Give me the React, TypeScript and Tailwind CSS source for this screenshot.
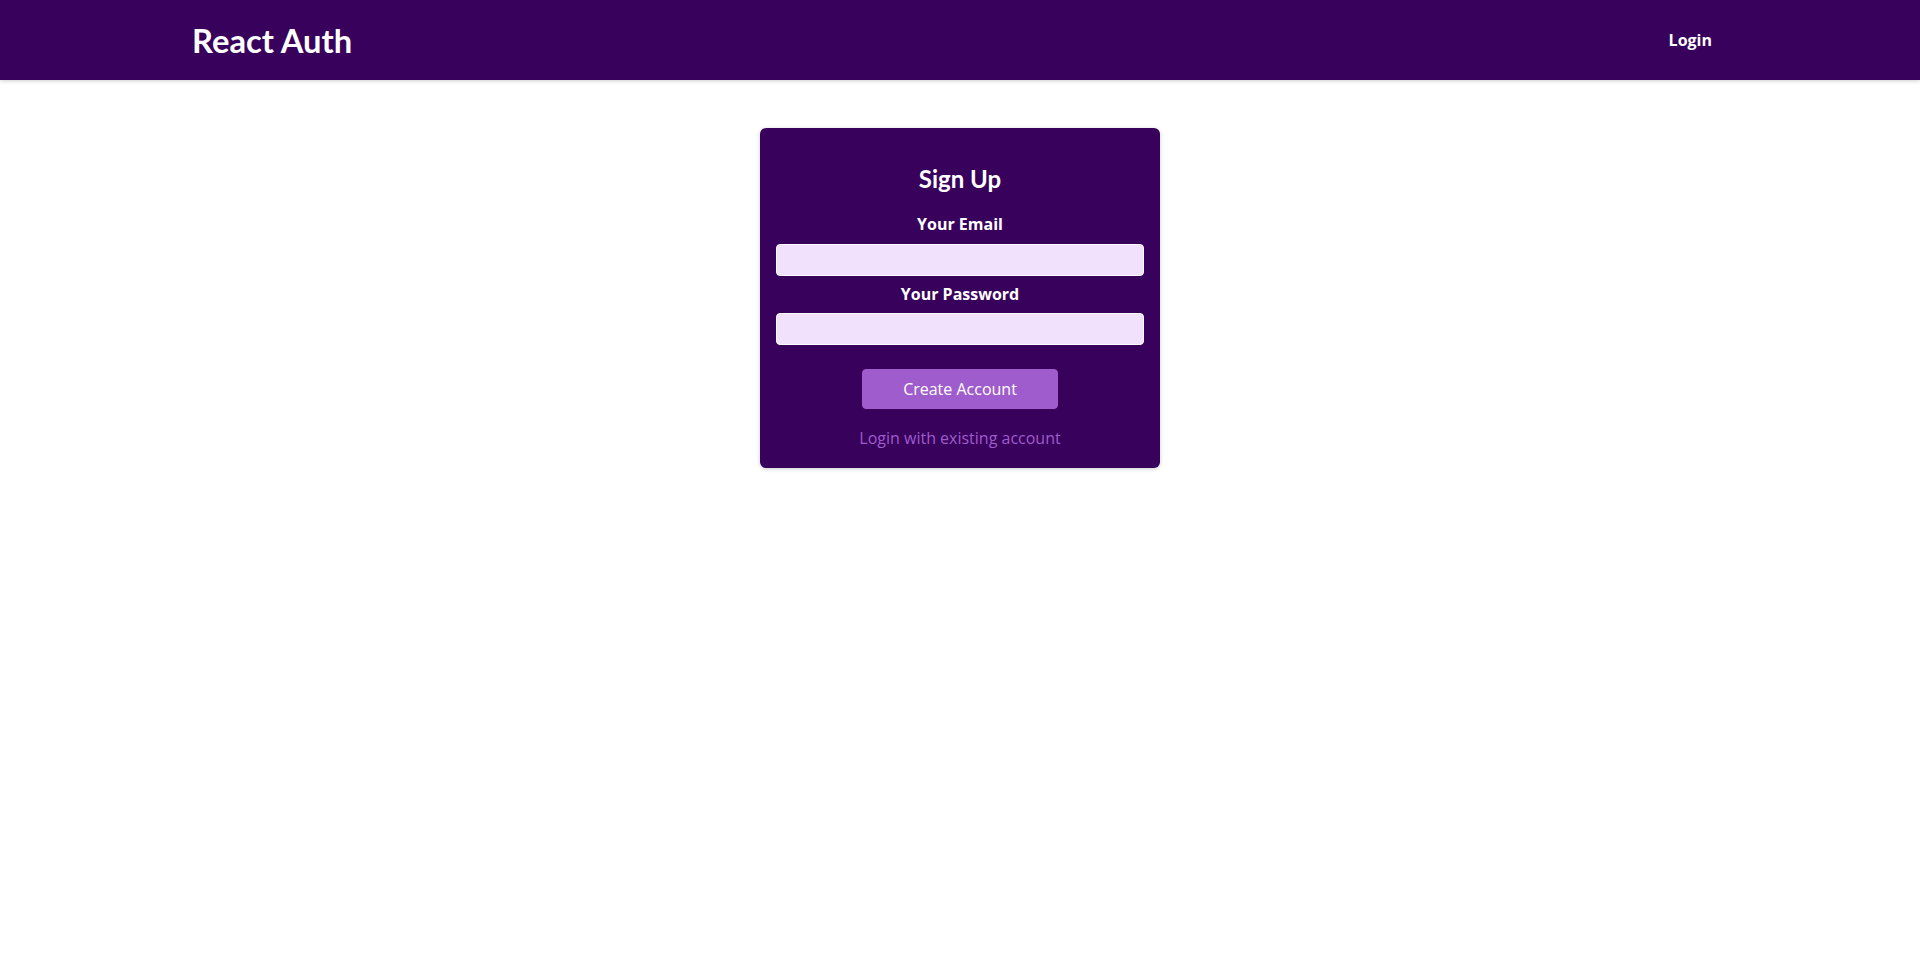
import { useState } from 'react';

function Header() {
  return (
    <header className="flex h-20 w-full items-center justify-between bg-[#38015c] px-[10%] shadow-[0_1px_4px_rgba(0,0,0,0.2)]">
      <div className="m-0 font-['Lato',sans-serif] text-[32.7px] font-bold leading-[normal] text-white">React Auth</div>
      <nav className="pt-[2px]">
        <ul className="m-0 flex list-none items-baseline p-0">
          <li className="mx-4">
            <a href="#" className="font-bold text-white no-underline">Login</a>
          </li>
        </ul>
      </nav>
    </header>
  );
}

function AuthForm() {
  const [email, setEmail] = useState('');
  const [password, setPassword] = useState('');

  return (
    <section className="mx-auto my-12 w-[95%] max-w-[25rem] rounded-md bg-[#38015c] p-4 text-center shadow-[0_1px_4px_rgba(0,0,0,0.2)]">
      <h1 className="my-[19.92px] font-['Lato',sans-serif] text-2xl font-bold leading-[1.25] text-white">Sign Up</h1>
      <form onSubmit={(e) => e.preventDefault()}>
        <div className="mb-2">
          <label htmlFor="email" className="mb-2 block font-bold text-white">Your Email</label>
          <input
            id="email"
            type="email"
            value={email}
            onChange={(e) => setEmail(e.target.value)}
            className="block h-8 w-full rounded border border-white bg-[#f1e1fc] p-1 text-left text-[#38015c] outline-none"
          />
        </div>
        <div>
          <label htmlFor="password" className="mb-2 block font-bold text-white">Your Password</label>
          <input
            id="password"
            type="password"
            value={password}
            onChange={(e) => setPassword(e.target.value)}
            className="block h-8 w-full rounded border border-white bg-[#f1e1fc] p-1 text-left text-[#38015c] outline-none"
          />
        </div>
        <div className="mt-6 flex flex-col items-center">
          <button className="cursor-pointer rounded border border-[#9f5ccc] bg-[#9f5ccc] px-10 pb-[7px] pt-[9px] text-white">Create Account</button>
          <button type="button" className="mt-[16.5px] cursor-pointer border-none bg-transparent px-6 py-[2.4px] text-[#9f5ccc]">
            Login with existing account
          </button>
        </div>
      </form>
    </section>
  );
}

export default function App() {
  return (
    <div className="min-h-screen bg-white font-['Open_Sans','Noto_Sans',sans-serif] text-base leading-[1.362]">
      <Header />
      <main>
        <AuthForm />
      </main>
    </div>
  );
}
